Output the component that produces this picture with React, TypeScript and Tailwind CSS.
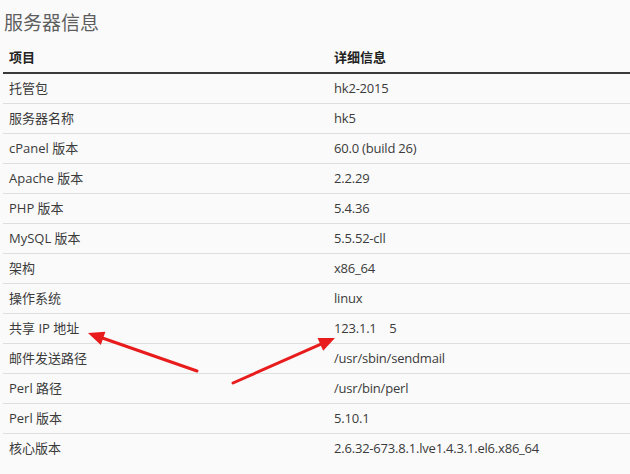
const rows: [string, string][] = [
  ['托管包', 'hk2-2015'],
  ['服务器名称', 'hk5'],
  ['cPanel 版本', '60.0 (build 26)'],
  ['Apache 版本', '2.2.29'],
  ['PHP 版本', '5.4.36'],
  ['MySQL 版本', '5.5.52-cll'],
  ['架构', 'x86_64'],
  ['操作系统', 'linux'],
  ['共享 IP 地址', '123.1.1    5'],
  ['邮件发送路径', '/usr/sbin/sendmail'],
  ['Perl 路径', '/usr/bin/perl'],
  ['Perl 版本', '5.10.1'],
  ['核心版本', '2.6.32-673.8.1.lve1.4.3.1.el6.x86_64'],
];

function Arrow({ x1, y1, x2, y2 }: { x1: number; y1: number; x2: number; y2: number }) {
  const a = Math.atan2(y2 - y1, x2 - x1);
  const len = 16;
  const w = 7;
  const bx = x2 - len * Math.cos(a);
  const by = y2 - len * Math.sin(a);
  const px = -Math.sin(a) * w;
  const py = Math.cos(a) * w;
  return (
    <g>
      <line x1={x1} y1={y1} x2={bx} y2={by} stroke="#e81c1c" strokeWidth={3} strokeLinecap="round" />
      <polygon points={`${x2},${y2} ${bx + px},${by + py} ${bx - px},${by - py}`} fill="#e81c1c" />
    </g>
  );
}

export default function App() {
  return (
    <div
      className="relative w-[630px] h-[474px] overflow-hidden bg-[#fafafa] text-[#3b3b3b]"
      style={{ fontFamily: '"Open Sans", "Noto Sans CJK SC", sans-serif' }}
    >
      <h1 className="h-[43px] pl-[4px] pt-[9px] text-[19px] leading-[28px] font-normal text-[#5e5e5e]">服务器信息</h1>

      <div className="ml-[3px]">
        <div className="flex h-[31px] items-center border-b-2 border-[#3a3a3a] text-[13px] font-bold text-[#222]">
          <div className="w-[325px] pl-[6px]">项目</div>
          <div className="flex-1 pl-[6px]">详细信息</div>
        </div>
        {rows.map(([k, v], i) => (
          <div
            key={k}
            className={`flex h-[30px] items-center text-[13px] ${i < rows.length - 1 ? 'border-b border-[#dedede]' : ''}`}
          >
            <div className="w-[325px] pl-[6px]">{k}</div>
            <div className="flex-1 pl-[6px] whitespace-pre tracking-[-0.2px]">{v}</div>
          </div>
        ))}
      </div>

      <svg className="absolute inset-0 pointer-events-none" width={630} height={474}>
        <Arrow x1={197} y1={371} x2={88} y2={333} />
        <Arrow x1={233} y1={383} x2={335} y2={338} />
      </svg>
    </div>
  );
}
